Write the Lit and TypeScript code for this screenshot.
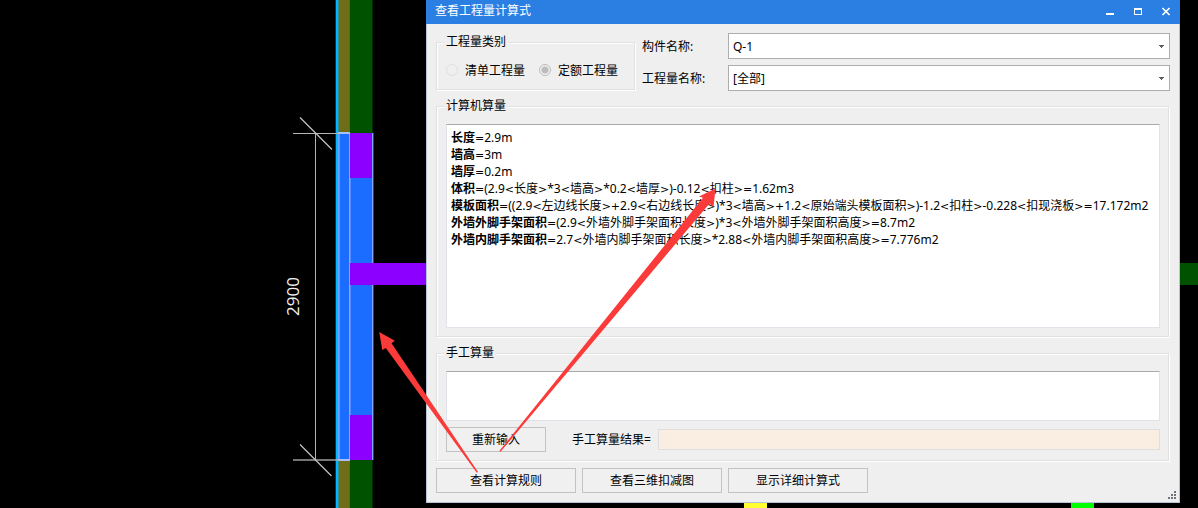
import { LitElement, html, css } from "lit";
import { customElement, state } from "lit/decorators.js";

interface Formula {
  name: string;
  expression: string;
}

const FORMULAS: Formula[] = [
  { name: "长度", expression: "=2.9m" },
  { name: "墙高", expression: "=3m" },
  { name: "墙厚", expression: "=0.2m" },
  { name: "体积", expression: "=(2.9<长度>*3<墙高>*0.2<墙厚>)-0.12<扣柱>=1.62m3" },
  {
    name: "模板面积",
    expression:
      "=((2.9<左边线长度>+2.9<右边线长度>)*3<墙高>+1.2<原始端头模板面积>)-1.2<扣柱>-0.228<扣现浇板>=17.172m2",
  },
  { name: "外墙外脚手架面积", expression: "=(2.9<外墙外脚手架面积长度>)*3<外墙外脚手架面积高度>=8.7m2" },
  { name: "外墙内脚手架面积", expression: "=2.7<外墙内脚手架面积长度>*2.88<外墙内脚手架面积高度>=7.776m2" },
];

/** The plan view of the wall that lies behind the dialog. */
@customElement("plan-view")
export class PlanView extends LitElement {
  static styles = css`
    :host { display: block; background: #000; }
    .drawing { display: block; width: 100%; height: 100%; }
    .dimension { font: 17px "Open Sans", "Noto Sans", sans-serif; fill: #f0f0f0; }
  `;

  render() {
    return html`
      <svg class="drawing" role="img" aria-label="2900" shape-rendering="crispEdges">
        <rect x="335" width="1" height="100%" fill="#00384d" />
        <rect x="336" width="2" height="100%" fill="#00b8ff" />
        <rect x="338" width="1" height="100%" fill="#3b8a8c" />
        <rect x="339" width="10" height="100%" fill="#6f6d18" />
        <rect x="349" width="1" height="100%" fill="#5c6a14" />
        <rect x="350" width="22" height="100%" fill="#005200" />
        <rect x="372" width="1" height="100%" fill="#002b00" />
        <rect x="338" y="133" width="35" height="327" fill="#1a6dff" />
        <rect x="350" y="133" width="22" height="45" fill="#8c00ff" />
        <rect x="350" y="415" width="22" height="45" fill="#8c00ff" />
        <rect x="338" y="133" width="1" height="327" fill="#6aa4ff" />
        <rect x="339" y="133" width="1" height="327" fill="#5d95ff" />
        <rect x="349" y="133" width="1" height="327" fill="#86a8ff" />
        <rect x="350" y="178" width="1" height="237" fill="#5a8cff" />
        <rect x="372" y="133" width="1" height="327" fill="#86a4ff" />
        <rect x="373" y="133" width="1" height="327" fill="#33437a" />
        <rect x="350" y="263" width="100" height="22" fill="#8c00ff" />
        <rect x="1180" y="263" width="100%" height="22" fill="#005200" />
        <rect x="744" y="495" width="23" height="100%" fill="#ffff32" />
        <rect x="1071" y="495" width="23" height="100%" fill="#00ff00" />
        <rect x="338" y="132" width="12" height="2" fill="#a9c0ff" />
        <rect x="338" y="459" width="12" height="2" fill="#a9c0ff" />
        <g fill="#b4b4b8">
          <rect x="293" y="133" width="46" height="1" />
          <rect x="293" y="459" width="46" height="2" opacity="0.65" />
          <rect x="315" y="133" width="1" height="327" />
        </g>
        <g stroke="#c4c4c4" stroke-width="1.200" shape-rendering="auto">
          <path d="M300 117.500L332 149.500M300 444.500L331.500 476" />
        </g>
        <text class="dimension" transform="translate(299 316) rotate(-90)">2900</text>
      </svg>
    `;
  }
}

/** The red arrows drawn over the dialog and the plan. */
@customElement("red-arrows")
export class RedArrows extends LitElement {
  static styles = css`
    :host { display: block; pointer-events: none; }
    .arrows { display: block; width: 100%; height: 100%; }
  `;

  render() {
    return html`
      <svg class="arrows" fill="#fb3a3a" aria-hidden="true">
        <path d="M379.200 332L394.800 340.800L391.500 343.200L478 472L476.800 472.800L385.800 348L382.300 350Z" />
        <path d="M715.500 188.500L713.500 207L709.500 203.500L500.500 451.800L499.300 451L703 197.700L699 196.500Z" />
      </svg>
    `;
  }
}

@customElement("quantity-dialog")
export class QuantityDialog extends LitElement {
  @state() private mode = "quota";

  static styles = css`
    :host { display: block; color: #000; }
    * { box-sizing: border-box; }
    button, select, input, textarea { font: inherit; color: inherit; margin: 0; border-radius: 0; }
    .title-bar {
      display: flex; align-items: center; justify-content: space-between;
      height: 24px; padding: 0 8px 2px 9px; background: #2b7fe2; color: #fff;
    }
    .title { margin: 0; font-size: 12px; font-weight: 400; }
    .window-buttons { display: flex; gap: 16px; }
    .window-button { display: block; width: 12px; height: 12px; padding: 0; border: 0; background: none; color: #fff; }
    .window-button svg { display: block; }
    .body {
      display: flex; flex-direction: column; gap: 6px; position: relative;
      padding: 9px; background: #efefef; border: 1px solid #b9c3d6; border-top: 0;
    }
    .top { display: grid; grid-template-columns: 200px 1fr; gap: 6px; }
    .group {
      min-width: 0; margin: 0 1px 1px 0; padding: 9px 8px 8px 9px; border: 1px solid #e0e0e0;
      box-shadow: 1px 1px 0 #fff, inset 1px 1px 0 #fff;
    }
    .legend { height: 18px; line-height: 18px; padding: 0 2px; margin-left: -2px; background: #efefef; }
    .radios { display: flex; gap: 14px; padding-top: 2px; }
    .radio { display: flex; align-items: center; gap: 7px; line-height: 18px; }
    .radio input {
      appearance: none; width: 12px; height: 12px; margin-bottom: 2px; border: 1px solid #e0e0e0; border-radius: 50%;
    }
    .radio input:checked {
      border-color: #bcbcbc; background: radial-gradient(circle, #bcbcbc 3px, transparent 4px);
    }
    .fields { display: grid; grid-template-columns: 80px 1fr; gap: 6px; align-items: center; }
    .fields label { padding-top: 2px; }
    .select {
      appearance: none; width: 100%; height: 26px; padding: 2px 20px 0 4px; border: 1px solid #adadad;
      background: #fff url("data:image/svg+xml,%3Csvg xmlns='http://www.w3.org/2000/svg' width='5' height='3'%3E%3Cpath d='M0 0h5v1h-1v1h-1v1h-1v-1h-1v-1h-1z' fill='%23606060'/%3E%3C/svg%3E") no-repeat right 5px center;
    }
    .box {
      display: block; width: 100%; background: #fff; border: 1px solid #e0e3ea; border-top-color: #a9a9ad;
    }
    .formulas { height: 204px; padding: 4px; line-height: 17px; overflow: auto; }
    .formula { margin: 0; }
    .operator { font-family: "DejaVu Sans", sans-serif; font-size: 11px; line-height: 1; }
    .manual { height: 50px; padding: 4px; resize: none; outline: 0; }
    .manual-row { display: flex; align-items: center; margin-top: 6px; }
    .button { height: 25px; padding: 0; border: 1px solid #c3c3c3; background: #f0f0f0; }
    .button.reset { width: 100px; }
    .button.action { width: 140px; }
    .result-label { margin: 0 7px 0 26px; }
    .result { flex: 1; min-width: 0; height: 21px; border: 1px solid #dedede; background: #faeee3; outline: 0; }
    .actions { display: flex; flex-wrap: wrap; gap: 6px; }
    .grip { position: absolute; right: 3px; bottom: 3px; display: block; }
  `;

  private renderExpression(text: string) {
    return text.split(/([<>=+])/).map((part) =>
      /^[<>=+]$/.test(part) ? html`<span class="operator">${part}</span>` : part,
    );
  }

  private renderRadio(value: string, label: string) {
    return html`<label class="radio"
      ><input type="radio" name="kind" .value=${value} .checked=${this.mode === value} disabled />${label}</label
    >`;
  }

  render() {
    return html`
      <header class="title-bar">
        <h1 class="title">查看工程量计算式</h1>
        <div class="window-buttons">
          <button class="window-button" aria-label="最小化">
            <svg width="12" height="12"><path d="M2 8h8v2h-8z" fill="#fff" /></svg>
          </button>
          <button class="window-button" aria-label="最大化">
            <svg width="12" height="12"><path d="M2 3h8v7h-8zM3 5v4h6v-4z" fill="#fff" fill-rule="evenodd" /></svg>
          </button>
          <button class="window-button" aria-label="关闭">
            <svg width="12" height="12"><path d="M2.500 3L9.500 10M9.500 3L2.500 10" stroke="#fff" stroke-width="1.700" /></svg>
          </button>
        </div>
      </header>
      <div class="body">
        <div class="top">
          <fieldset class="group">
            <legend class="legend">工程量类别</legend>
            <div class="radios">${this.renderRadio("list", "清单工程量")}${this.renderRadio("quota", "定额工程量")}</div>
          </fieldset>
          <div class="fields">
            <label for="component">构件名称:</label>
            <select id="component" class="select"><option>Q-1</option></select>
            <label for="quantity">工程量名称:</label>
            <select id="quantity" class="select"><option>[全部]</option></select>
          </div>
        </div>
        <fieldset class="group">
          <legend class="legend">计算机算量</legend>
          <div class="box formulas">
            ${FORMULAS.map(
              (f) => html`<p class="formula"><b>${f.name}</b>${this.renderExpression(f.expression)}</p>`,
            )}
          </div>
        </fieldset>
        <fieldset class="group">
          <legend class="legend">手工算量</legend>
          <textarea class="box manual" aria-label="手工算量"></textarea>
          <div class="manual-row">
            <button class="button reset">重新输入</button>
            <label class="result-label" for="result">手工算量结果=</label>
            <input id="result" class="result" type="text" readonly />
          </div>
        </fieldset>
        <div class="actions">
          <button class="button action">查看计算规则</button>
          <button class="button action">查看三维扣减图</button>
          <button class="button action">显示详细计算式</button>
        </div>
        <svg class="grip" width="8" height="8" aria-hidden="true">
          <path d="M6 0h2v2h-2zM3 3h2v2h-2zM6 3h2v2h-2zM0 6h2v2h-2zM3 6h2v2h-2zM6 6h2v2h-2z" fill="#70747c" />
        </svg>
      </div>
    `;
  }
}

@customElement("app-root")
export class AppRoot extends LitElement {
  static styles = css`
    :host {
      display: block; position: relative; height: 100vh; overflow: hidden; background: #000;
      font: 12px/16px "Noto Sans", "Noto Sans CJK SC", sans-serif;
    }
    .plan { height: 100%; }
    .dialog { position: absolute; top: 0; left: 426px; right: 18px; }
    .arrows { position: absolute; inset: 0; }
  `;

  render() {
    return html`
      <plan-view class="plan"></plan-view>
      <quantity-dialog class="dialog"></quantity-dialog>
      <red-arrows class="arrows"></red-arrows>
    `;
  }
}
